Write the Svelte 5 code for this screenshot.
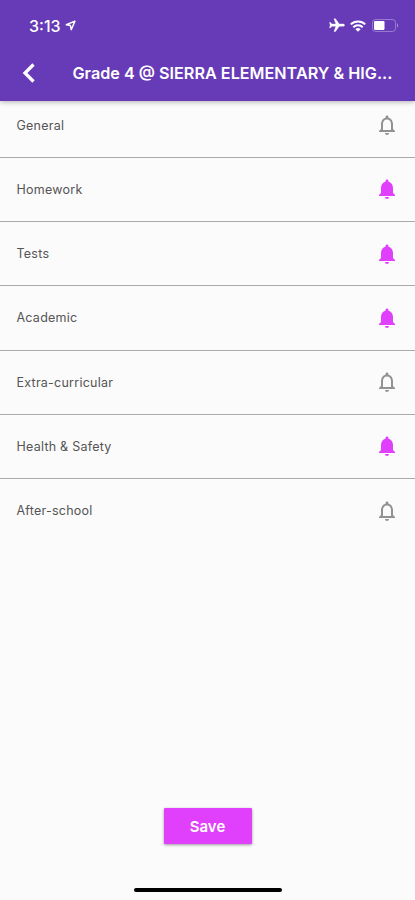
<script>
  let topics = $state([
    { name: "General", on: false },
    { name: "Homework", on: true },
    { name: "Tests", on: true },
    { name: "Academic", on: true },
    { name: "Extra-curricular", on: false },
    { name: "Health & Safety", on: true },
    { name: "After-school", on: false },
  ]);
</script>

<div class="screen">
  <header>
    <div class="status-bar">
      <span class="time">3:13</span>
      <svg class="location" viewBox="0 0 12 12" width="11" height="11">
        <path
          d="M10.8 1.2 1.4 5.2l4.5.9.9 4.5z"
          fill="none"
          stroke="#fff"
          stroke-width="1.6"
          stroke-linejoin="round"
        />
      </svg>
      <div class="indicators">
        <svg class="plane" viewBox="2 2 20 20" width="16" height="15">
          <path
            fill="#fff"
            stroke="#fff"
            stroke-width="0.5"
            transform="rotate(90 12 12)"
            d="M20 16v-2l-7-5V3.5c0-.83-.67-1.5-1.5-1.5S10 2.67 10 3.5V9l-7 5v2l7-2.5V19l-2 1.5V22l3.5-1 3.5 1v-1.5L13 19v-5.5l7 2.5z"
          />
        </svg>
        <svg class="wifi" viewBox="0 0 16 12" width="16" height="12">
          <g fill="none" stroke="#fff" stroke-width="2">
            <path d="M.8 4.4a10.2 10.2 0 0 1 14.4 0" />
            <path d="M3.3 7.2a6.65 6.65 0 0 1 9.4 0" />
          </g>
          <path fill="#fff" d="M8 11.8 5.4 9.2a3.7 3.7 0 0 1 5.2 0z" />
        </svg>
        <svg class="battery" viewBox="0 0 27 13" width="27" height="13">
          <rect
            x=".5"
            y=".5"
            width="23"
            height="12"
            rx="3"
            fill="none"
            stroke="#fff"
            stroke-opacity=".32"
          />
          <rect x="2" y="2" width="10.5" height="9" rx="1.2" fill="#fff" />
          <path d="M25 4.3v4.4c1.6-.6 1.6-3.8 0-4.4z" fill="#fff" opacity=".4" />
        </svg>
      </div>
    </div>

    <div class="app-bar">
      <button class="back" aria-label="Back">
        <svg viewBox="0 0 14 20" width="14" height="20">
          <path d="M12.5 1.5 4 10l8.5 8.5" fill="none" stroke="#fff" stroke-width="3.3" />
        </svg>
      </button>
      <h1>Grade 4 @ SIERRA ELEMENTARY & HIG...</h1>
    </div>
  </header>

  <ul>
    {#each topics as topic}
      <li>
        <span>{topic.name}</span>
        <button
          class="bell"
          class:on={topic.on}
          aria-label="Toggle {topic.name}"
          onclick={() => (topic.on = !topic.on)}
        >
          <svg viewBox="0 0 24 24" width="24" height="24" fill="currentColor">
            {#if topic.on}
              <path
                d="M12 22c1.1 0 2-.9 2-2h-4c0 1.1.89 2 2 2zm6-6v-5c0-3.07-1.64-5.64-4.5-6.32V4c0-.83-.67-1.5-1.5-1.5s-1.5.67-1.5 1.5v.68C7.63 5.36 6 7.92 6 11v5l-2 2v1h16v-1l-2-2z"
              />
            {:else}
              <path
                d="M12 22c1.1 0 2-.9 2-2h-4c0 1.1.9 2 2 2zm6-6v-5c0-3.07-1.63-5.64-4.5-6.32V4c0-.83-.67-1.5-1.5-1.5s-1.5.67-1.5 1.5v.68C7.64 5.36 6 7.92 6 11v5l-2 2v1h16v-1l-2-2zm-2 1H8v-6c0-2.48 1.51-4.5 4-4.5s4 2.02 4 4.5v6z"
              />
            {/if}
          </svg>
        </button>
      </li>
    {/each}
  </ul>

  <footer>
    <button class="save">Save</button>
    <div class="home-indicator"></div>
  </footer>
</div>

<style>
  :global(body) {
    margin: 0;
  }

  .screen {
    display: flex;
    flex-direction: column;
    height: 900px;
    overflow: hidden;
    background: #fbfbfb;
    font-family: Inter, "Liberation Sans", sans-serif;
  }

  button {
    padding: 0;
    border: 0;
    background: none;
    font-family: inherit;
    cursor: pointer;
  }

  svg {
    display: block;
  }

  header {
    position: relative;
    flex: none;
    height: 100.5px;
    background: #673ab7;
    color: #fff;
    box-shadow: 0 1px 5px rgba(0, 0, 0, 0.3);
  }

  .status-bar {
    display: flex;
    align-items: center;
    height: 51px;
    padding: 0 16px 0 29px;
    box-sizing: border-box;
  }

  .time {
    width: 33px;
    font-size: 16px;
    font-weight: 500;
    white-space: nowrap;
  }

  .location {
    margin-left: 3px;
  }

  .indicators {
    display: flex;
    align-items: center;
    margin-left: auto;
  }

  .wifi {
    margin: 0 6px 0 5px;
  }

  .app-bar {
    display: flex;
    align-items: center;
    height: 43px;
    padding: 0 16px 0 21px;
  }

  .back {
    width: 51.5px;
    flex: none;
  }

  h1 {
    flex: 1;
    margin: 0;
    font-size: 16.2px;
    font-weight: 600;
    line-height: 24px;
    white-space: nowrap;
  }

  ul {
    margin: 0;
    padding: 0;
    list-style: none;
  }

  li {
    display: flex;
    align-items: center;
    justify-content: space-between;
    height: 64.25px;
    padding: 0 16px 0 16.5px;
    box-sizing: border-box;
    border-bottom: 1px solid #aaa;
    color: #555;
    font-size: 12.5px;
    letter-spacing: 0.24px;
  }

  /* first row is tucked under the app bar */
  li:first-child {
    margin-top: -7px;
  }

  li:last-child {
    border-bottom-color: transparent;
  }

  .bell {
    color: #929292;
  }

  .bell.on {
    color: #e040fb;
  }

  footer {
    display: flex;
    flex-direction: column;
    align-items: center;
    margin-top: auto;
    padding-bottom: 8px;
  }

  .save {
    width: 88px;
    height: 36px;
    border-radius: 1px;
    background: #e040fb;
    box-shadow: 0 1px 3px rgba(0, 0, 0, 0.4);
    color: #fff;
    font-size: 15px;
    font-weight: 600;
  }

  .home-indicator {
    width: 148px;
    height: 4px;
    margin-top: 44px;
    border-radius: 2px;
    background: #000;
  }
</style>
